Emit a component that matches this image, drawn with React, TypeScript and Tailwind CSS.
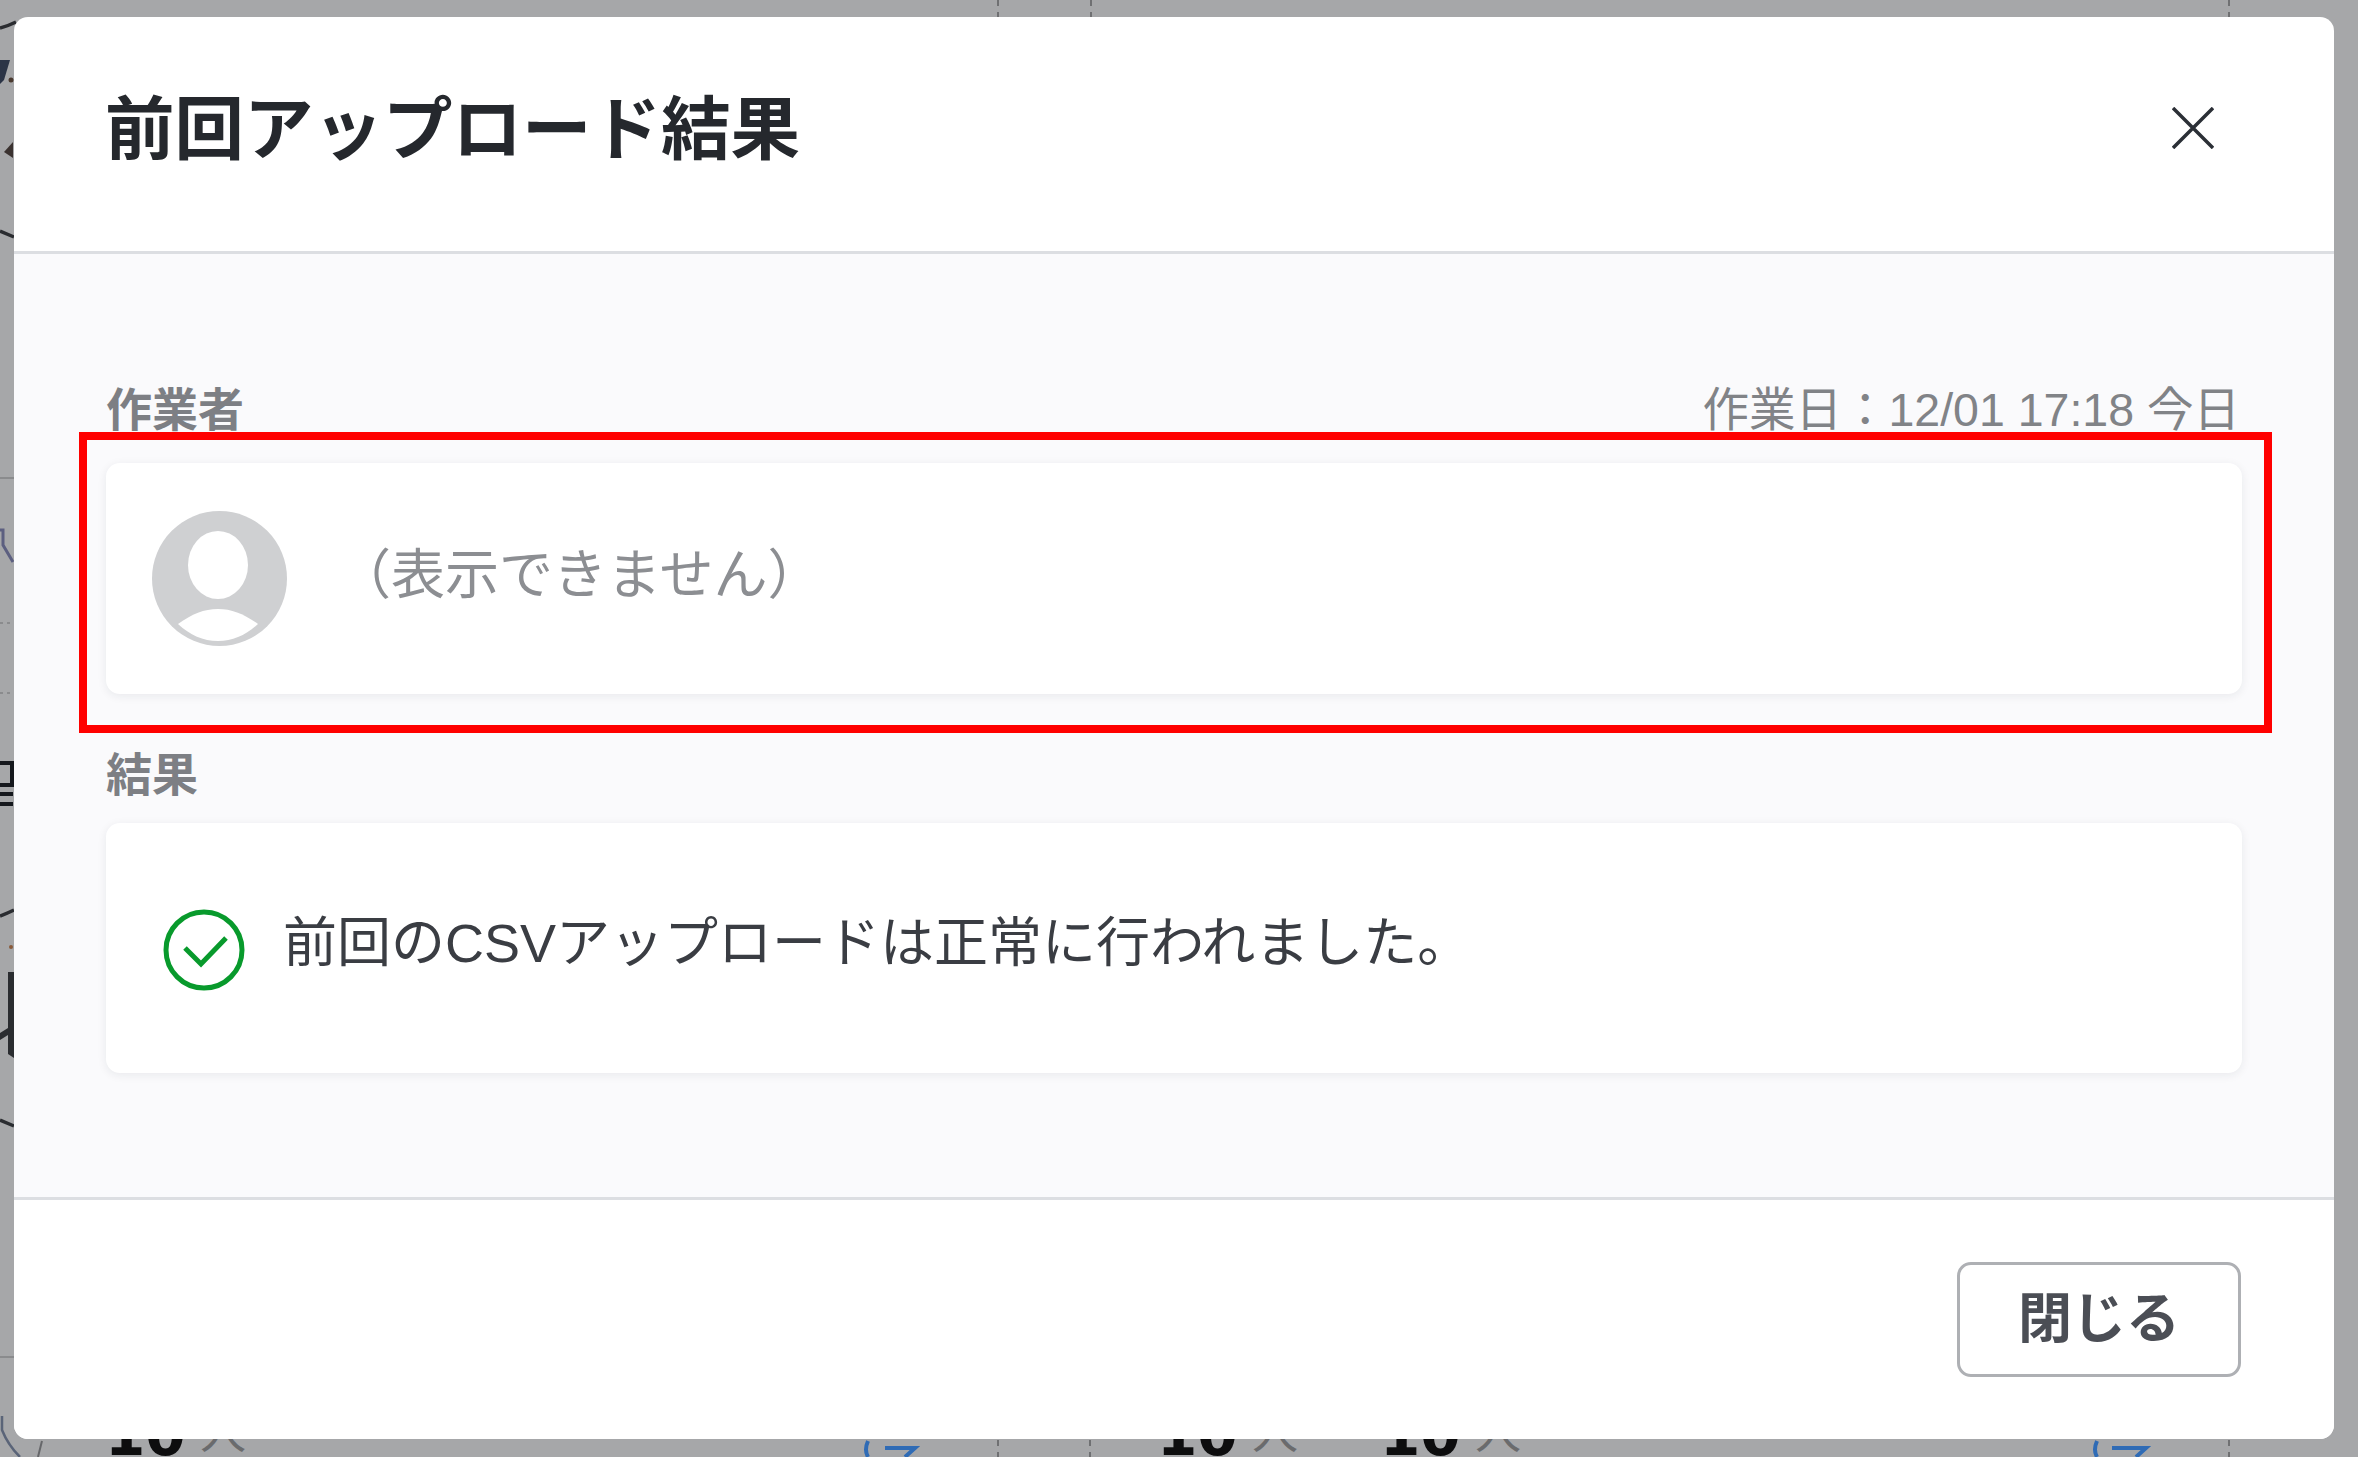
const fontStack = "font-['Liberation_Sans','Noto_Sans_CJK_JP',sans-serif]";

function Backdrop() {
  return (
    <>
      <svg className="absolute inset-0" width="2358" height="1457" fill="none">
        <g stroke="#6f7072" strokeWidth="2" strokeDasharray="6 6">
          <path d="M998 0V18M1091 0V18M2229 0V18M998 1440V1457M1090 1440V1457M2229 1440V1457" />
        </g>
        <g stroke="#8a8b8d" strokeWidth="2">
          <path d="M0 478H14M0 1357H14" />
          <path d="M0 623H10M0 693H10" strokeDasharray="3 4" />
        </g>
        <g stroke="#2a2c30" strokeWidth="3.5">
          <path d="M0 28Q8 26 16 22M0 231L14 237M0 916Q8 913 14 910M0 1120L14 1126" />
        </g>
        <path d="M0 60H10L4 80L0 84Z" fill="#2b3446" />
        <circle cx="11" cy="80" r="2.5" fill="#4a3a30" />
        <path d="M4 152L13 142V158Z" fill="#3a3230" />
        <circle cx="11" cy="947" r="2" fill="#8a5a3a" />
        <path d="M8 972H14V1058L8 1054V1035L0 1040V1033L8 1028Z" fill="#2a2c30" />
        <path d="M0 530H3V545L13 562" stroke="#5c5f80" strokeWidth="3" />
        <path d="M0 763H12V785H0M0 794H13M0 804H13" stroke="#15181d" strokeWidth="4" />
        <path d="M2 1416V1430Q8 1445 20 1457" stroke="#5a6478" strokeWidth="2.5" />
        <path d="M42 1441L38 1457" stroke="#66676a" strokeWidth="2" />
        <path d="M868 1441Q864 1450 868 1457M885 1448H915L905 1457" stroke="#2f6bb5" strokeWidth="4" />
        <path d="M2097 1441Q2093 1450 2097 1457M2112 1448H2146L2136 1457" stroke="#2f6bb5" strokeWidth="4" />
      </svg>
      <span className="absolute left-[105px] top-[1395px] font-['DejaVu_Sans',sans-serif] text-[58px] font-bold leading-[80px] text-[#0d0d0e]">10</span>
      <span className="absolute left-[200px] top-[1402px] text-[46px] leading-[60px] text-[#6a6b6d]">人</span>
      <span className="absolute left-[1157px] top-[1395px] font-['DejaVu_Sans',sans-serif] text-[58px] font-bold leading-[80px] text-[#0d0d0e]">10</span>
      <span className="absolute left-[1252px] top-[1402px] text-[46px] leading-[60px] text-[#6a6b6d]">人</span>
      <span className="absolute left-[1380px] top-[1395px] font-['DejaVu_Sans',sans-serif] text-[58px] font-bold leading-[80px] text-[#0d0d0e]">10</span>
      <span className="absolute left-[1475px] top-[1402px] text-[46px] leading-[60px] text-[#6a6b6d]">人</span>
    </>
  );
}

function AvatarIcon() {
  return (
    <svg width="135" height="135" viewBox="0 0 135 135" className="-mt-[1px] shrink-0">
      <circle cx="67.5" cy="67.5" r="67.5" fill="#cfd0d2" />
      <ellipse cx="66" cy="54" rx="30" ry="34" fill="#fff" />
      <path d="M26 113C40 103 52 98 66 98C80 98 92 103 106 113C94 124 81 130 66 130C51 130 38 124 26 113Z" fill="#fff" />
    </svg>
  );
}

function CheckIcon() {
  return (
    <svg width="82" height="82" viewBox="0 0 82 82" fill="none" stroke="#089a2c" strokeWidth="5" className="mt-[3px] shrink-0">
      <circle cx="41" cy="41" r="38" />
      <path d="M22 39L38 55L63 29" />
    </svg>
  );
}

function App() {
  return (
    <div className={`relative h-[1457px] w-[2358px] overflow-hidden bg-[#a6a7a9] pl-[14px] pt-[17px] ${fontStack}`}>
      <Backdrop />
      <div className="relative flex h-[1422px] w-[2320px] flex-col overflow-hidden rounded-[14px] bg-white">
        <div className="flex h-[237px] shrink-0 items-center justify-between border-b-[3px] border-[#dcdee2] pl-[91px] pr-[120px]">
          <h1 className="-mt-[6px] text-[69.5px] font-bold leading-none text-[#25282d]">前回アップロード結果</h1>
          <svg width="42" height="42" viewBox="0 0 42 42" stroke="#2b2f36" strokeWidth="3.5" className="-mt-[12px]">
            <path d="M1 1L41 41M41 1L1 41" />
          </svg>
        </div>

        <div className="flex-1 bg-[#fafafc] px-[92px] pt-[126px]">
          <div className="flex items-center justify-between pr-[2px] text-[46px] leading-[60px]">
            <span className="font-bold text-[#7d7f84]">作業者</span>
            <span className="text-[46.5px] text-[#818387]">作業日：12/01 17:18 今日</span>
          </div>
          <div className="relative mt-[23px] flex h-[231px] items-center rounded-[14px] bg-white pl-[46px] shadow-[0_2px_10px_rgba(30,35,50,0.08)]">
            <AvatarIcon />
            <span className="-mt-[6px] ml-[50px] text-[54px] text-[#8c8e92]">（表示できません）</span>
            <div className="absolute -bottom-[39px] -left-[27px] -right-[30px] -top-[31px] border-8 border-[#ff0000]" />
          </div>

          <div className="mt-[51px] text-[46px] font-bold leading-[60px] text-[#7d7f84]">結果</div>
          <div className="mt-[18px] flex h-[250px] items-center rounded-[14px] bg-white pl-[57px] shadow-[0_2px_10px_rgba(30,35,50,0.08)]">
            <CheckIcon />
            <span className="-mt-[10px] ml-[38px] text-[54px] text-[#3a3d43]">前回のCSVアップロードは正常に行われました。</span>
          </div>
        </div>

        <div className="flex h-[242px] shrink-0 items-center justify-end border-t-[3px] border-[#dcdee2] bg-white pr-[93px]">
          <button className="flex h-[115px] w-[284px] items-center justify-center rounded-[14px] border-[3px] border-[#aeb0b4] bg-white text-[54px] font-bold text-[#4b4e55]">
            閉じる
          </button>
        </div>
      </div>
    </div>
  );
}

export default App;
